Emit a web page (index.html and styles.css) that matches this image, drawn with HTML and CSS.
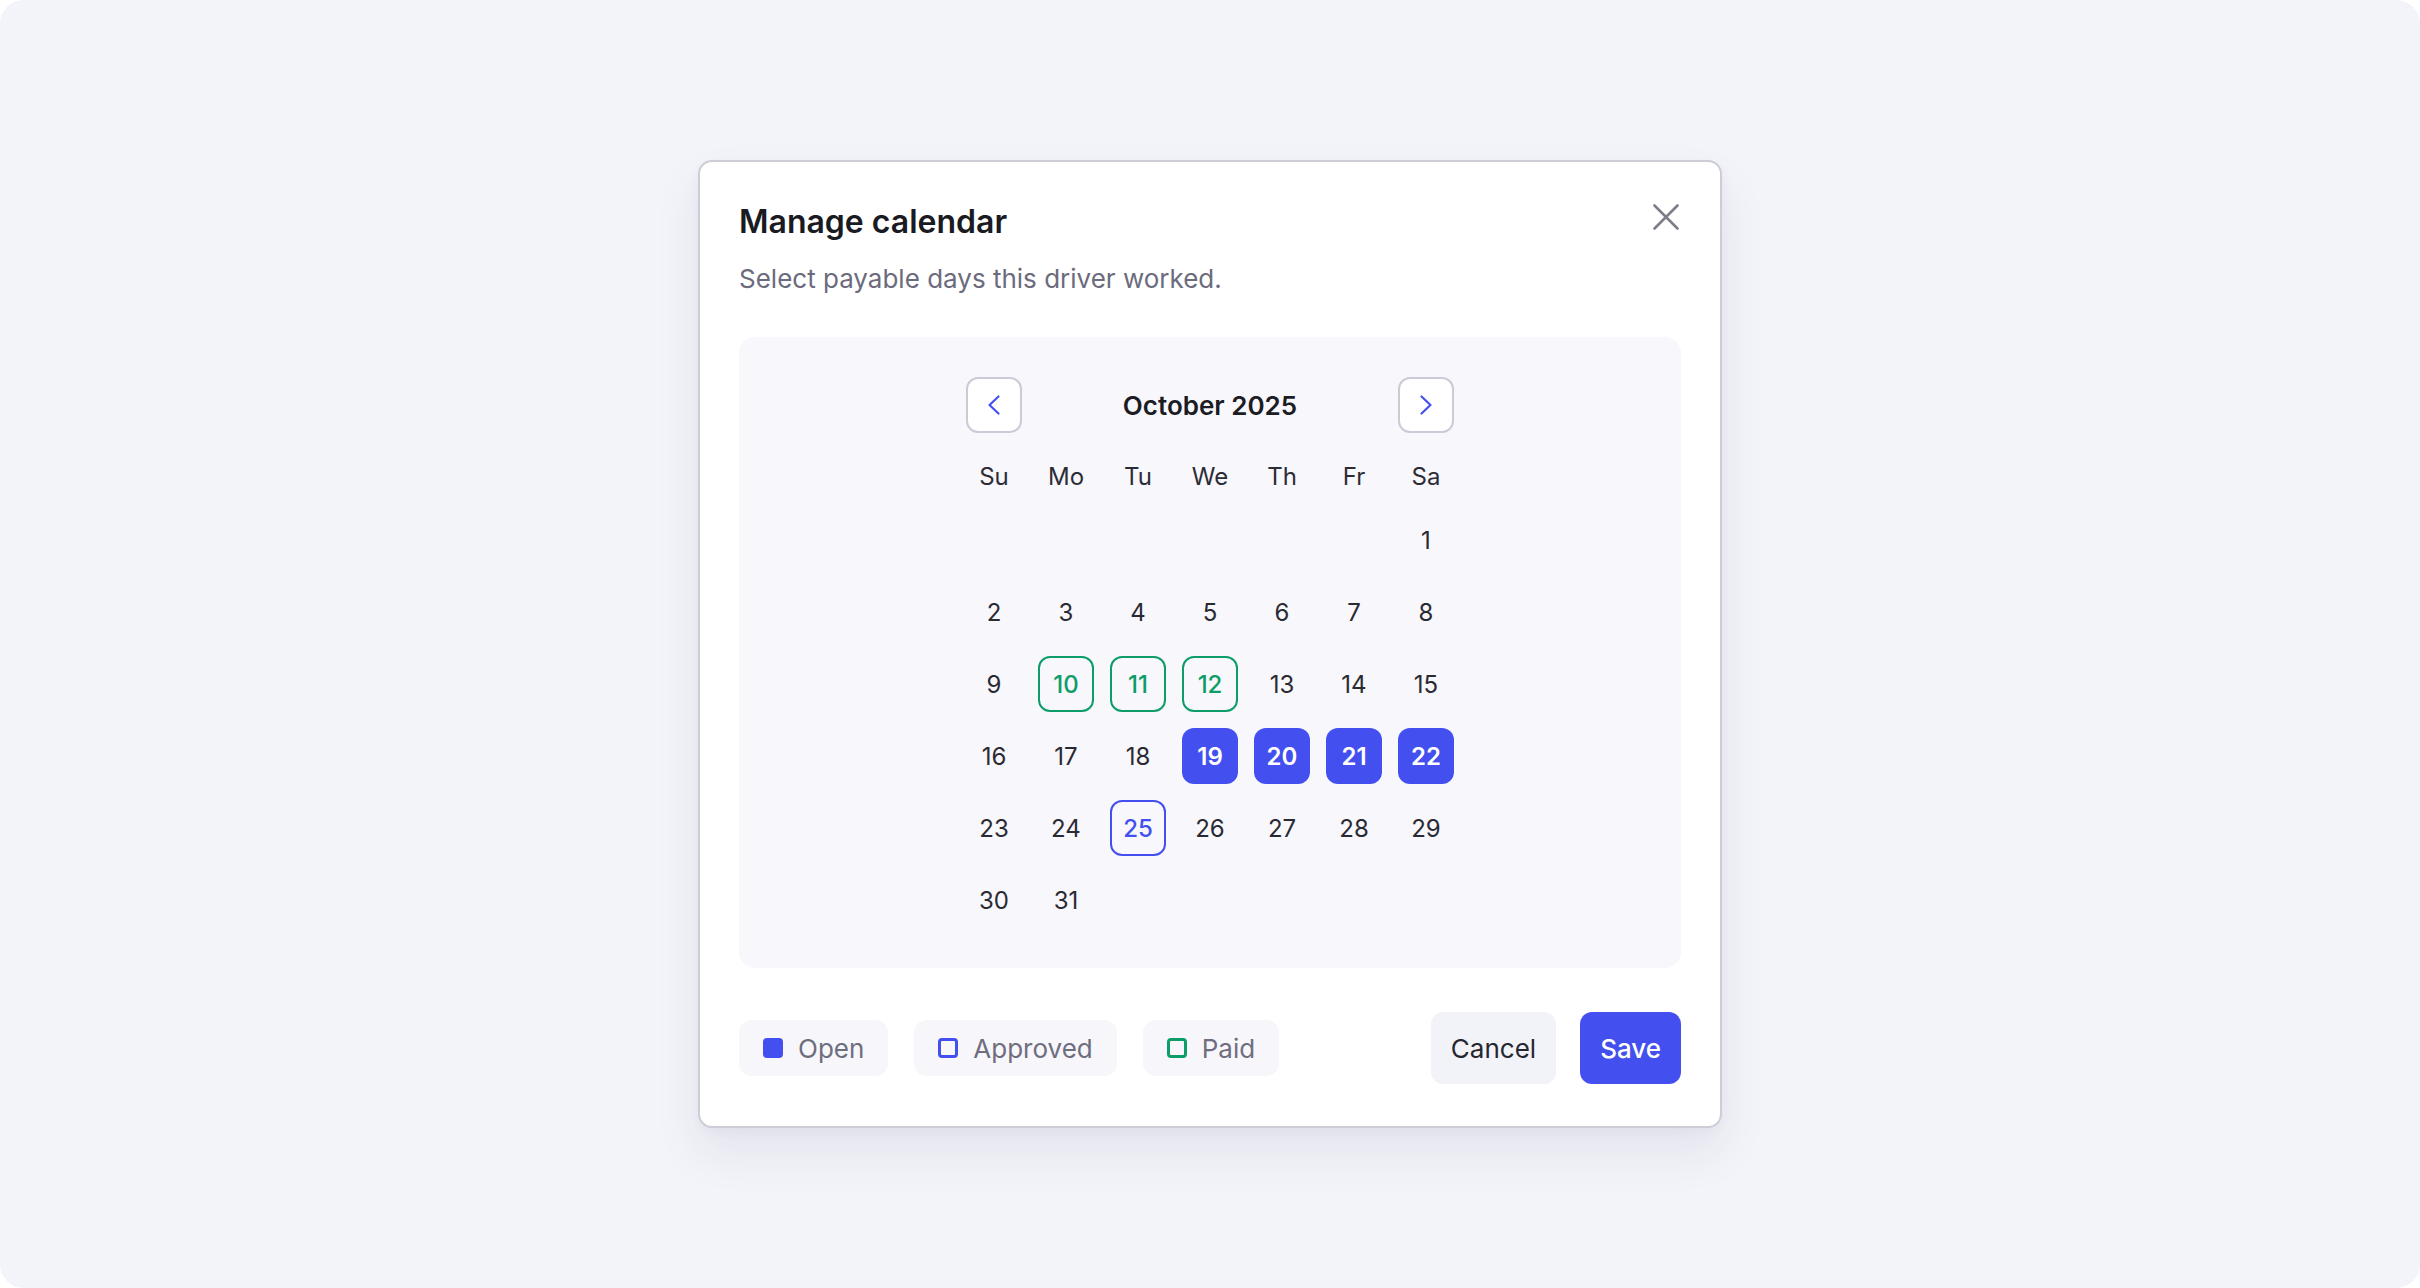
FILE: index.html
```html
<!DOCTYPE html>
<html lang="en">
<head>
    <meta charset="UTF-8">
    <meta name="viewport" content="width=device-width, initial-scale=1.0">
    <title>Manage calendar</title>
    <link rel="stylesheet" href="styles.css">
</head>
<body>
    <div class="page">
        <div class="modal">
            <div class="modal-head">
                <div>
                    <h2>Manage calendar</h2>
                    <p>Select payable days this driver worked.</p>
                </div>
                <button class="close" aria-label="Close">
                    <svg width="30" height="30" viewBox="0 0 30 30" fill="none" stroke="currentColor" stroke-width="2.6" stroke-linecap="round">
                        <path d="M3.5 3.5L26.5 26.5M26.5 3.5L3.5 26.5"/>
                    </svg>
                </button>
            </div>

            <div class="calendar">
                <div class="cal-head">
                    <button class="nav-btn" aria-label="Previous month">
                        <svg width="28" height="28" viewBox="0 0 28 28" fill="none" stroke="currentColor" stroke-width="2.2" stroke-linecap="round" stroke-linejoin="round">
                            <path d="M18.5 5.5L9.5 14L18.5 22.5"/>
                        </svg>
                    </button>
                    <span class="month">October 2025</span>
                    <button class="nav-btn" aria-label="Next month">
                        <svg width="28" height="28" viewBox="0 0 28 28" fill="none" stroke="currentColor" stroke-width="2.2" stroke-linecap="round" stroke-linejoin="round">
                            <path d="M9.5 5.5L18.5 14L9.5 22.5"/>
                        </svg>
                    </button>
                </div>

                <div class="weekdays">
                    <span>Su</span><span>Mo</span><span>Tu</span><span>We</span><span>Th</span><span>Fr</span><span>Sa</span>
                </div>

                <div class="days">
                    <span></span><span></span><span></span><span></span><span></span><span></span>
                    <span class="day">1</span>
                    <span class="day">2</span>
                    <span class="day">3</span>
                    <span class="day">4</span>
                    <span class="day">5</span>
                    <span class="day">6</span>
                    <span class="day">7</span>
                    <span class="day">8</span>
                    <span class="day">9</span>
                    <span class="day paid">10</span>
                    <span class="day paid">11</span>
                    <span class="day paid">12</span>
                    <span class="day">13</span>
                    <span class="day">14</span>
                    <span class="day">15</span>
                    <span class="day">16</span>
                    <span class="day">17</span>
                    <span class="day">18</span>
                    <span class="day open">19</span>
                    <span class="day open">20</span>
                    <span class="day open">21</span>
                    <span class="day open">22</span>
                    <span class="day">23</span>
                    <span class="day">24</span>
                    <span class="day approved">25</span>
                    <span class="day">26</span>
                    <span class="day">27</span>
                    <span class="day">28</span>
                    <span class="day">29</span>
                    <span class="day">30</span>
                    <span class="day">31</span>
                </div>
            </div>

            <div class="modal-foot">
                <div class="legend">
                    <span class="chip"><i class="swatch swatch-open"></i>Open</span>
                    <span class="chip"><i class="swatch swatch-approved"></i>Approved</span>
                    <span class="chip"><i class="swatch swatch-paid"></i>Paid</span>
                </div>
                <div class="actions">
                    <button class="btn btn-cancel">Cancel</button>
                    <button class="btn btn-save">Save</button>
                </div>
            </div>
        </div>
    </div>
</body>
</html>
```

FILE: styles.css
```css
* {
    box-sizing: border-box;
}
html, body {
    margin: 0;
    padding: 0;
    background-color: #ffffff;
}
body {
    font-family: Inter, "Noto Sans", Arial, sans-serif;
    color: #1c1c24;
}
button {
    font-family: inherit;
    cursor: pointer;
}
.page {
    height: 100vh;
    background-color: #f3f4f9;
    border-radius: 24px;
    display: flex;
    justify-content: center;
    align-items: center;
}
.modal {
    width: 1024px;
    background-color: #ffffff;
    border: 2px solid #cdcdd8;
    border-radius: 14px;
    padding: 40px 39px 42px;
    box-shadow: 0 24px 48px rgba(40, 40, 90, 0.08), 0 4px 12px rgba(40, 40, 90, 0.04);
}
.modal-head {
    display: flex;
    justify-content: space-between;
    align-items: flex-start;
}
.modal-head h2 {
    margin: 0;
    font-size: 32px;
    line-height: 40px;
    font-weight: 600;
    color: #1a1a22;
}
.modal-head p {
    margin: 19px 0 0;
    font-size: 26px;
    line-height: 36px;
    color: #6b6b7d;
}
.close {
    width: 30px;
    height: 30px;
    padding: 0;
    border: none;
    background: none;
    color: #7d7d89;
    display: flex;
}
.calendar {
    margin-top: 40px;
    background-color: #f7f7fc;
    border-radius: 16px;
    padding: 40px 0;
    display: flex;
    flex-direction: column;
    align-items: center;
}
.cal-head {
    width: 488px;
    display: flex;
    justify-content: space-between;
    align-items: center;
}
.nav-btn {
    width: 56px;
    height: 56px;
    padding: 0;
    border: 2px solid #cbcbd8;
    border-radius: 12px;
    background-color: #ffffff;
    color: #4350ef;
    display: flex;
    justify-content: center;
    align-items: center;
}
.month {
    font-size: 26px;
    font-weight: 600;
    color: #1c1c24;
}
.weekdays, .days {
    display: grid;
    grid-template-columns: repeat(7, 56px);
    column-gap: 16px;
}
.weekdays {
    margin: 23px 0 16px;
}
.weekdays span {
    height: 40px;
    display: flex;
    justify-content: center;
    align-items: center;
    font-size: 24px;
    color: #2c2c36;
}
.days {
    row-gap: 16px;
}
.day {
    height: 56px;
    display: flex;
    justify-content: center;
    align-items: center;
    border-radius: 12px;
    font-size: 24px;
    color: #2a2a33;
}
.day.paid {
    border: 2px solid #0c9d69;
    color: #0c9d69;
    font-weight: 500;
}
.day.approved {
    border: 2px solid #4350ef;
    color: #4350ef;
    font-weight: 500;
}
.day.open {
    background-color: #4350ef;
    color: #ffffff;
    font-weight: 600;
}
.modal-foot {
    margin-top: 44px;
    display: flex;
    justify-content: space-between;
    align-items: center;
}
.legend {
    display: flex;
    gap: 26px;
}
.chip {
    height: 56px;
    padding: 0 24px;
    display: flex;
    align-items: center;
    gap: 15px;
    background-color: #f6f6fb;
    border-radius: 13px;
    font-size: 26px;
    color: #6e6e7f;
}
.swatch {
    width: 20px;
    height: 20px;
    border-radius: 4px;
}
.swatch-open {
    background-color: #4350ef;
}
.swatch-approved {
    border: 3px solid #4350ef;
}
.swatch-paid {
    border: 3px solid #0c9d69;
}
.actions {
    display: flex;
    gap: 24px;
}
.btn {
    height: 72px;
    padding: 0 20px;
    border: none;
    border-radius: 12px;
    font-size: 26px;
}
.btn-cancel {
    background-color: #f2f3f8;
    color: #26262e;
}
.btn-save {
    background-color: #4350ef;
    color: #ffffff;
    font-weight: 500;
}
```
